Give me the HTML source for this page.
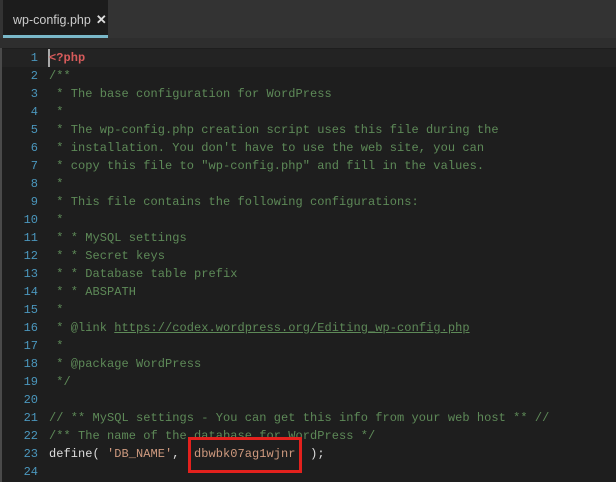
<!DOCTYPE html>
<html><head><meta charset="utf-8"><style>
*{margin:0;padding:0;box-sizing:border-box}
body{width:616px;height:482px;overflow:hidden;background:#1e1e1e;font-family:"Liberation Mono",monospace;position:relative}
.bar{position:absolute;left:0;top:0;width:616px;height:38px;background:#333}
.tab{position:absolute;left:3px;top:0;width:105px;height:38px;background:#1c1c1c;border-bottom:3px solid #7ab8c9;color:#ccc;font:12.5px "Liberation Sans",sans-serif;padding:12px 0 0 10px;white-space:nowrap}
.tab b{color:#ddd;margin-left:5px;font-size:13px}
.strip{position:absolute;left:0;top:38px;width:616px;height:10px;background:#2e2e2e}
.ed{position:absolute;left:0;top:48px;width:616px;height:434px;border-left:2px solid #4a4a4a}
.hl{position:absolute;left:0;top:1px;width:616px;height:18px;background:#232323}
.ln{position:absolute;left:0;width:38px;text-align:right;color:#4b97bd;font-size:12px;line-height:18px}
.c{position:absolute;left:49px;font-size:12px;line-height:18px;white-space:pre;color:#ddd;letter-spacing:0.05px}
.cm{color:#5e8a58}.php{color:#d65b5b;font-weight:bold}.s{color:#cf9a7f}
.cur{position:absolute;left:48px;top:49px;width:2px;height:18px;background:#aaa}
.box{position:absolute;left:188px;top:437px;width:114px;height:36px;border:3px solid #e3211d}
</style></head><body>
<div class="bar"><div class="tab">wp-config.php<b>✕</b></div></div>
<div class="strip"></div>
<div class="ed"><div class="hl"></div></div>
<div class="cur"></div>
<div id="L"></div>
<script>
var lines=[
'<span class="php">&lt;?php</span>',
'<span class="cm">/**</span>',
'<span class="cm"> * The base configuration for WordPress</span>',
'<span class="cm"> *</span>',
'<span class="cm"> * The wp-config.php creation script uses this file during the</span>',
'<span class="cm"> * installation. You don\'t have to use the web site, you can</span>',
'<span class="cm"> * copy this file to "wp-config.php" and fill in the values.</span>',
'<span class="cm"> *</span>',
'<span class="cm"> * This file contains the following configurations:</span>',
'<span class="cm"> *</span>',
'<span class="cm"> * * MySQL settings</span>',
'<span class="cm"> * * Secret keys</span>',
'<span class="cm"> * * Database table prefix</span>',
'<span class="cm"> * * ABSPATH</span>',
'<span class="cm"> *</span>',
'<span class="cm"> * @link <u>https://codex.wordpress.org/Editing_wp-config.php</u></span>',
'<span class="cm"> *</span>',
'<span class="cm"> * @package WordPress</span>',
'<span class="cm"> */</span>',
'',
'<span class="cm">// ** MySQL settings - You can get this info from your web host ** //</span>',
'<span class="cm">/** The name of the database for WordPress */</span>',
'define( <span class="s">\'DB_NAME\'</span>,  <span class="s">dbwbk07ag1wjnr</span>  );',
''];
var h='';for(var i=0;i<lines.length;i++){var t=49+i*18;h+='<div class="ln" style="top:'+t+'px">'+(i+1)+'</div><div class="c" style="top:'+t+'px">'+lines[i]+'</div>';}
document.getElementById('L').innerHTML=h;
</script>
<div class="box"></div>
</body></html>
